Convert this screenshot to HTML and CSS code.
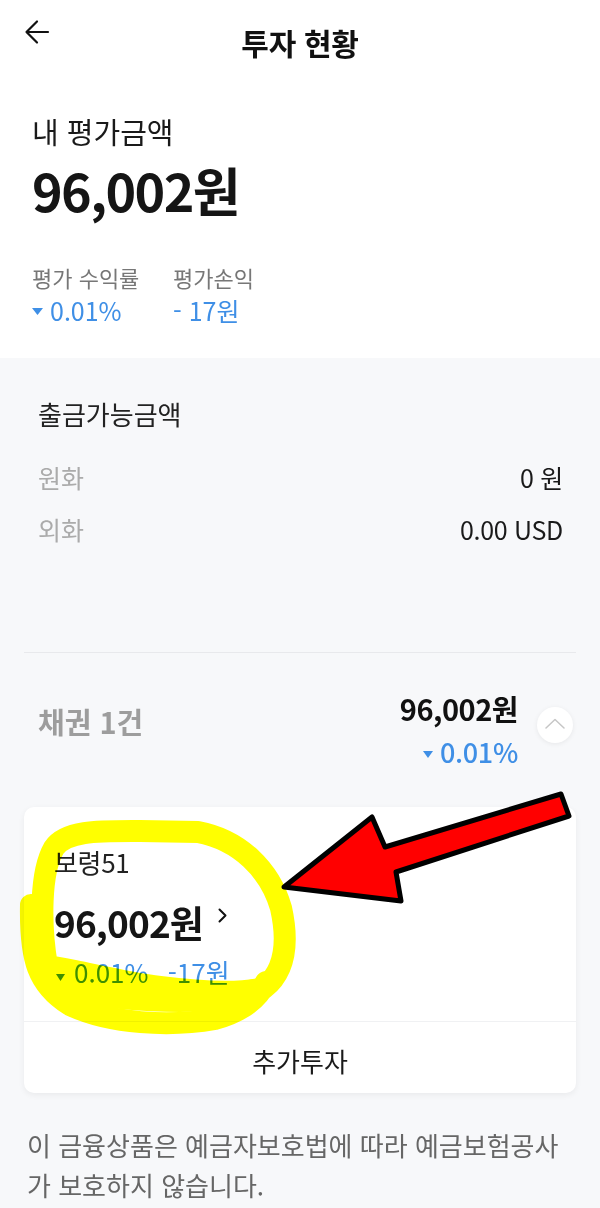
FILE: index.html
```html
<!DOCTYPE html>
<html lang="ko">
<head>
<meta charset="utf-8">
<title>투자 현황</title>
<link rel="stylesheet" href="styles.css">
</head>
<body>
<div class="page">
  <section class="top">
    <header class="appbar">
      <span class="back">
        <svg width="26" height="26" viewBox="0 0 26 26"><path d="M24 13H2.5M13 2.5L2.5 13 13 23.5" fill="none" stroke="#111" stroke-width="2.2" stroke-linecap="round" stroke-linejoin="round"/></svg>
      </span>
      <h1 class="title">투자 현황</h1>
      <span></span>
    </header>
    <div class="summary">
      <p class="sum-label">내 평가금액</p>
      <p class="sum-amount">96,002원</p>
      <div class="stats">
        <div class="stat">
          <p class="stat-label">평가 수익률</p>
          <p class="stat-value"><svg class="tri tri-lg" viewBox="0 0 11 7"><path d="M0 0h11L5.5 7z" fill="#3f8fe6"/></svg>0.01%</p>
        </div>
        <div class="stat">
          <p class="stat-label">평가손익</p>
          <p class="stat-value">- 17원</p>
        </div>
      </div>
    </div>
  </section>

  <section class="avail">
    <h2 class="avail-title">출금가능금액</h2>
    <div class="avail-row"><span class="avail-key">원화</span><span class="avail-val">0 원</span></div>
    <div class="avail-row"><span class="avail-key">외화</span><span class="avail-val">0.00 USD</span></div>
  </section>

  <div class="divider"></div>

  <section class="bond-head">
    <h2 class="bond-title">채권 1건</h2>
    <div class="bond-sum">
      <p class="bond-amount">96,002원</p>
      <p class="bond-rate"><svg class="tri tri-md" viewBox="0 0 10 7"><path d="M0 0h10L5 7z" fill="#3f8fe6"/></svg>0.01%</p>
    </div>
    <button class="collapse" type="button" aria-label="접기">
      <svg width="20" height="11" viewBox="0 0 20 11"><path d="M1 10L10 1.5 19 10" fill="none" stroke="#c6c6c6" stroke-width="1.5" stroke-linecap="round" stroke-linejoin="round"/></svg>
    </button>
  </section>

  <article class="card">
    <div class="card-body">
      <p class="card-name">보령51</p>
      <p class="card-amount">96,002원<svg class="chev" width="9" height="15" viewBox="0 0 9 15"><path d="M1.5 1.5L7.5 7.5 1.5 13.5" fill="none" stroke="#111" stroke-width="2" stroke-linecap="round" stroke-linejoin="round"/></svg></p>
      <p class="card-stats">
        <span class="card-rate"><svg class="tri tri-sm" viewBox="0 0 9 7"><path d="M0 0h9L4.5 7z" fill="#3f8fe6"/></svg>0.01%</span>
        <span class="card-pl">-17원</span>
      </p>
    </div>
    <div class="card-action">추가투자</div>
  </article>

  <p class="notice">이 금융상품은 예금자보호법에 따라 예금보험공사가 보호하지 않습니다.</p>

  <svg class="mark-highlight" width="600" height="1208" viewBox="0 0 600 1208">
    <g fill="none" stroke="#ffff00" stroke-linecap="round" stroke-linejoin="round">
      <path stroke-width="22" d="M47 966C40 925 40 872 54 848C66 830 100 831 140 831L198 832C240 840 270 870 281 908C289 944 284 972 264 988C240 994 200 992 160 987C130 983 100 976 75 971C60 968 52 967 47 966Z"/>
      <path stroke-width="22" d="M31 905C30 960 38 985 70 1005C110 1024 170 1027 215 1019C240 1012 258 999 266 982"/>
      <path stroke-width="26" d="M55 982C100 1000 200 1004 255 992"/>
    </g>
  </svg>

  <svg class="mark-arrow" width="600" height="1208" viewBox="0 0 600 1208">
    <path d="M284 887L372 817 385 847 561 794 569 816 396 872 401 901Z" fill="#ff0000" stroke="#000" stroke-width="5" stroke-linejoin="round"/>
  </svg>
</div>
</body>
</html>
```

FILE: styles.css
```css
* { box-sizing: border-box; }

html, body {
  margin: 0;
  padding: 0;
  background: #f7f8fa;
}

body {
  font-family: "Noto Sans CJK KR", "Noto Sans", sans-serif;
  color: #111;
}

p, h1, h2 { margin: 0; font-weight: inherit; }

.page {
  position: relative;
  width: 600px;
  min-height: 1208px;
  overflow: hidden;
}

/* ---------- top white section ---------- */
.top {
  background: #fff;
  padding-bottom: 32px;
}

.appbar {
  display: grid;
  grid-template-columns: 1fr auto 1fr;
  height: 84px;
}

.back {
  align-self: start;
  padding: 19px 0 0 24px;
  line-height: 0;
}

.title {
  font-size: 30px;
  font-weight: 700;
  line-height: 84px;
  letter-spacing: -0.3px;
}

.summary {
  padding: 29px 32px 0;
}

.sum-label {
  font-size: 29px;
  line-height: 36px;
  color: #1a1a1a;
}

.sum-amount {
  margin-top: 11px;
  font-size: 52px;
  font-weight: 700;
  line-height: 60px;
  letter-spacing: -1.6px;
  color: #151515;
}

.stats {
  display: grid;
  grid-template-columns: 141px auto;
  margin-top: 43px;
}

.stat-label {
  font-size: 22px;
  line-height: 28px;
  color: #777;
}

.stat-value {
  margin-top: 3px;
  font-size: 25px;
  line-height: 32px;
  color: #3f8fe6;
}

.tri { display: inline-block; }
.tri-lg { width: 11px; height: 7px; margin-right: 7px; vertical-align: 6px; }
.tri-md { width: 10px; height: 7px; margin-right: 7px; vertical-align: 5px; }
.tri-sm { width: 9px; height: 7px; margin: 0 9px 0 2px; vertical-align: 2px; }

/* ---------- available ---------- */
.avail {
  padding: 39px 37px 0 38px;
}

.avail-title {
  font-size: 26px;
  line-height: 34px;
  color: #222;
}

.avail-row {
  display: flex;
  justify-content: space-between;
  font-size: 25px;
  line-height: 52px;
}

.avail-title + .avail-row { margin-top: 20px; }

.avail-key { color: #ababab; }
.avail-val { color: #1a1a1a; letter-spacing: -0.3px; }

.divider {
  height: 1px;
  margin: 97px 24px 0;
  background: #e8e9ec;
}

/* ---------- bond header ---------- */
.bond-head {
  display: flex;
  align-items: flex-start;
  padding: 35px 27px 0 38px;
}

.bond-title {
  flex: 1;
  margin-top: 13px;
  font-size: 29px;
  font-weight: 700;
  line-height: 40px;
  color: #9d9d9d;
}

.bond-sum {
  text-align: right;
}

.bond-amount {
  font-size: 29px;
  font-weight: 700;
  line-height: 40px;
  letter-spacing: -0.5px;
  color: #111;
}

.bond-rate {
  margin-top: 4px;
  font-size: 27px;
  font-weight: 500;
  line-height: 40px;
  letter-spacing: -0.3px;
  color: #3f8fe6;
}

.collapse {
  width: 36px;
  height: 36px;
  margin: 19px 0 0 19px;
  padding: 0 0 3px;
  border: 0;
  border-radius: 50%;
  background: #fff;
  box-shadow: 0 1px 5px rgba(0, 0, 0, 0.07);
  display: flex;
  align-items: center;
  justify-content: center;
}

/* ---------- card ---------- */
.card {
  margin: 35px 24px 0;
  background: #fff;
  border-radius: 10px;
  box-shadow: 0 2px 6px rgba(0, 0, 0, 0.06);
}

.card-body {
  padding: 39px 30px 33px;
  border-bottom: 1px solid #f0f1f3;
}

.card-name {
  font-size: 26px;
  line-height: 32px;
  letter-spacing: -0.3px;
  color: #222;
}

.card-amount {
  margin-top: 21px;
  font-size: 37px;
  font-weight: 700;
  line-height: 46px;
  letter-spacing: -0.9px;
  color: #151515;
}

.chev {
  margin-left: 15px;
  vertical-align: 15px;
}

.card-stats {
  margin-top: 11px;
  font-size: 26px;
  line-height: 32px;
  color: #3f8fe6;
}

.card-pl { margin-left: 12px; }

.card-action {
  padding: 22px 0 15px;
  font-size: 26px;
  line-height: 34px;
  text-align: center;
  color: #1a1a1a;
}

/* ---------- notice ---------- */
.notice {
  margin-top: 32px;
  padding: 0 24px 0 27px;
  font-size: 26px;
  line-height: 40px;
  color: #666;
}

/* ---------- screenshot annotations (overlay) ---------- */
.mark-highlight,
.mark-arrow {
  position: absolute;
  top: 0;
  left: 0;
  pointer-events: none;
}

.mark-highlight { mix-blend-mode: multiply; }
```
